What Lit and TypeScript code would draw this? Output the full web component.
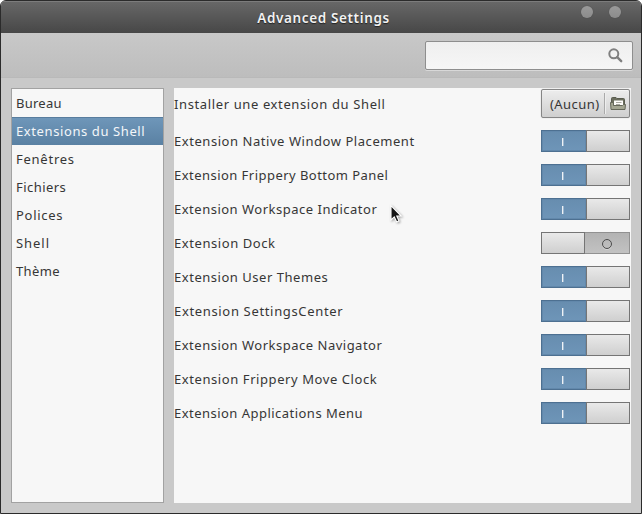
import { LitElement, html, css, svg } from "lit";
import { customElement, property } from "lit/decorators.js";
import { classMap } from "lit/directives/class-map.js";
import { styleMap } from "lit/directives/style-map.js";

interface Section { name: string; tracking: number; }
interface Extension { name: string; tracking: number; on: boolean; }

const sections: Section[] = [
  { name: "Bureau", tracking: 0.25 },
  { name: "Extensions du Shell", tracking: 0.6 },
  { name: "Fenêtres", tracking: 0.75 },
  { name: "Fichiers", tracking: 0.45 },
  { name: "Polices", tracking: 0.7 },
  { name: "Shell", tracking: 0.95 },
  { name: "Thème", tracking: 0.35 },
];

const extensions: Extension[] = [
  { name: "Extension Native Window Placement", tracking: 0.55, on: true },
  { name: "Extension Frippery Bottom Panel", tracking: 0.46, on: true },
  { name: "Extension Workspace Indicator", tracking: 0.5, on: true },
  { name: "Extension Dock", tracking: 0.57, on: false },
  { name: "Extension User Themes", tracking: 0.53, on: true },
  { name: "Extension SettingsCenter", tracking: 0.66, on: true },
  { name: "Extension Workspace Navigator", tracking: 0.5, on: true },
  { name: "Extension Frippery Move Clock", tracking: 0.58, on: true },
  { name: "Extension Applications Menu", tracking: 0.47, on: true },
];

const spacing = (px: number) => styleMap({ letterSpacing: `${px}px` });

@customElement("toggle-switch")
export class ToggleSwitch extends LitElement {
  @property({ type: Boolean }) on = false;

  static styles = css`
    :host { display: block; width: 89px; height: 22px; }
    .track { display: flex; box-sizing: border-box; width: 89px; height: 22px; border: 1px solid #757575; }
    .track.off { border-color: #919191; }
    .half { box-sizing: border-box; display: flex; align-items: center; justify-content: center; }
    .fill { width: 45px; margin: -1px 0 -1px -1px; border: 1px solid #4d7091; border-right: 0; background: linear-gradient(#678daf, #6e95b8); box-shadow: inset 0 0 0 1px #6288ab; }
    .knob { flex: 1; background: linear-gradient(#e9e9e9, #cfcfcf); }
    .fill + .knob { border-left: 1px solid #757575; }
    .off .knob { flex: none; width: 44px; margin: -1px 0 -1px -1px; border: 1px solid #757575; }
    .rest { flex: 1; background: linear-gradient(#b3b3b3, #c2c2c2); }
    .bar { width: 1px; height: 8px; background: #eef2f6; box-shadow: 1px 0 rgba(255, 255, 255, 0.35); margin-top: 1px; margin-right: 3px; }
    .ring { box-sizing: border-box; width: 10px; height: 10px; border: 1.3px solid #4b4b4b; border-radius: 50%; box-shadow: 0 1px #d5d5d5; margin: 1px 1px 0 0; }
  `;

  render() {
    return html`<div class=${classMap({ track: true, off: !this.on })}>
      ${this.on
        ? html`<div class="half fill"><span class="bar"></span></div><div class="half knob"></div>`
        : html`<div class="half knob"></div><div class="half rest"><span class="ring"></span></div>`}
    </div>`;
  }
}

@customElement("app-root")
export class AppRoot extends LitElement {
  static styles = css`
    :host { display: block; width: 642px; height: 514px; background: #fff; font: 13px/20px "Noto Sans", "Open Sans", sans-serif; color: #363636; }
    .window { box-sizing: border-box; position: relative; width: 642px; height: 514px; display: flex; flex-direction: column; border: 1px solid #2b2b2b; border-radius: 6px 6px 0 0; background: #c9c9c9; overflow: hidden; }
    .title { position: relative; height: 32px; flex: none; box-sizing: border-box; padding: 1px 0 0 5px; display: flex; align-items: center; justify-content: center; background: linear-gradient(#686868, #474747); box-shadow: inset 0 1px #7c7c7c; color: #f2f2f2; font-size: 13.5px; font-weight: 600; text-shadow: 0 1px 1px #222; letter-spacing: 0.63px; }
    .controls { position: absolute; right: 20px; top: 5px; display: flex; gap: 16px; }
    .dot { width: 12px; height: 12px; border-radius: 50%; background: linear-gradient(#9a9a9a, #8c8c8c); box-shadow: 0 0 1px #444; }
    .tools { flex: none; box-sizing: border-box; height: 45px; padding: 8px 8px 0; display: flex; justify-content: flex-end; background: linear-gradient(#c8c8c8, #bdbdbd); border-bottom: 1px solid #b9b9b9; }
    .search { box-sizing: border-box; width: 208px; height: 29px; border: 1px solid #8e8e8e; border-radius: 2px; background: linear-gradient(#efefef, #f6f6f6); box-shadow: 0 1px #d8d8d8; display: flex; justify-content: flex-end; align-items: center; padding-right: 9px; }
    .body { flex: 1; display: flex; gap: 10px; padding: 10px; }
    .side { box-sizing: border-box; width: 153px; border: 1px solid #a2a2a2; background: #f7f7f7; }
    .item { box-sizing: border-box; height: 28px; padding: 4px; white-space: nowrap; }
    .item.active { color: #f3f6f9; background: linear-gradient(#6f97ba, #5a81a3); box-shadow: inset 0 1px #587d9e; }
    .panel { flex: 1; box-sizing: border-box; background: #f7f7f7; padding: 1px 1px 0 0; display: flex; flex-direction: column; gap: 12px; }
    .row { display: flex; justify-content: space-between; align-items: center; height: 22px; white-space: nowrap; }
    .row.tall { height: 29px; letter-spacing: 0.62px; }
    .chooser { box-sizing: border-box; width: 89px; height: 29px; border: 1px solid #858585; border-radius: 2px; background: linear-gradient(#ededed, #cfcfcf); box-shadow: inset 0 1px #f5f5f5, 0 0 1px #aaa; display: flex; align-items: center; padding-left: 8px; }
    .value { flex: none; width: 54px; letter-spacing: 0.45px; }
    .rule { flex: none; width: 1px; height: 21px; background: #aaa; box-shadow: 1px 0 #eee; margin-right: 5px; }
    .chooser svg { flex: none; }
    .pointer { position: absolute; left: 388px; top: 203px; filter: drop-shadow(1px 1px 1px rgba(0, 0, 0, 0.35)); }
    svg { display: block; }
  `;

  private lens() {
    return svg`<svg width="15" height="15" viewBox="0 0 15 15" fill="none" stroke="#808080">
      <circle cx="5.8" cy="5.8" r="4.5" stroke-width="2" />
      <path d="M9.2 9.2 L13.2 13.2" stroke-width="2.4" stroke-linecap="round" />
    </svg>`;
  }

  private folder() {
    return svg`<svg width="16" height="15" viewBox="0 0 16 15">
      <path d="M1.5 13.5V2.5Q1.5 1.5 2.5 1.5H6L7 2.5H13.5Q14.5 2.5 14.5 3.5V13.5Z" fill="#6b6e5e" stroke="#5a5d50" />
      <path d="M4 4.5H13V10H4Z" fill="#fdfdfb" />
      <path d="M6 6.5H11.5M6 8.5H10" stroke="#aaaaa2" />
      <path d="M.5 6.5H3.5V9.5H12.5L13.5 8.5H15.5L15 13.5H1Z" fill="#a3a692" stroke="#65685a" />
    </svg>`;
  }

  private cursor() {
    return svg`<svg width="14" height="20" viewBox="0 0 14 20">
      <path d="M2 1.5V16L5.3 12.9L7.7 18L10 16.9L7.8 12H12.2Z" fill="#151515" stroke="#fff" stroke-width="1.1" />
    </svg>`;
  }

  render() {
    return html`<div class="window">
      <div class="title">Advanced Settings
        <div class="controls"><span class="dot"></span><span class="dot"></span></div>
      </div>
      <div class="tools"><div class="search">${this.lens()}</div></div>
      <div class="body">
        <div class="side">
          ${sections.map((s, i) => html`<div class=${classMap({ item: true, active: i === 1 })} style=${spacing(s.tracking)}>${s.name}</div>`)}
        </div>
        <div class="panel">
          <div class="row tall">
            <span>Installer une extension du Shell</span>
            <div class="chooser"><span class="value">(Aucun)</span><span class="rule"></span>${this.folder()}</div>
          </div>
          ${extensions.map((e) => html`<div class="row"><span style=${spacing(e.tracking)}>${e.name}</span><toggle-switch ?on=${e.on}></toggle-switch></div>`)}
        </div>
      </div>
      <div class="pointer">${this.cursor()}</div>
    </div>`;
  }
}
